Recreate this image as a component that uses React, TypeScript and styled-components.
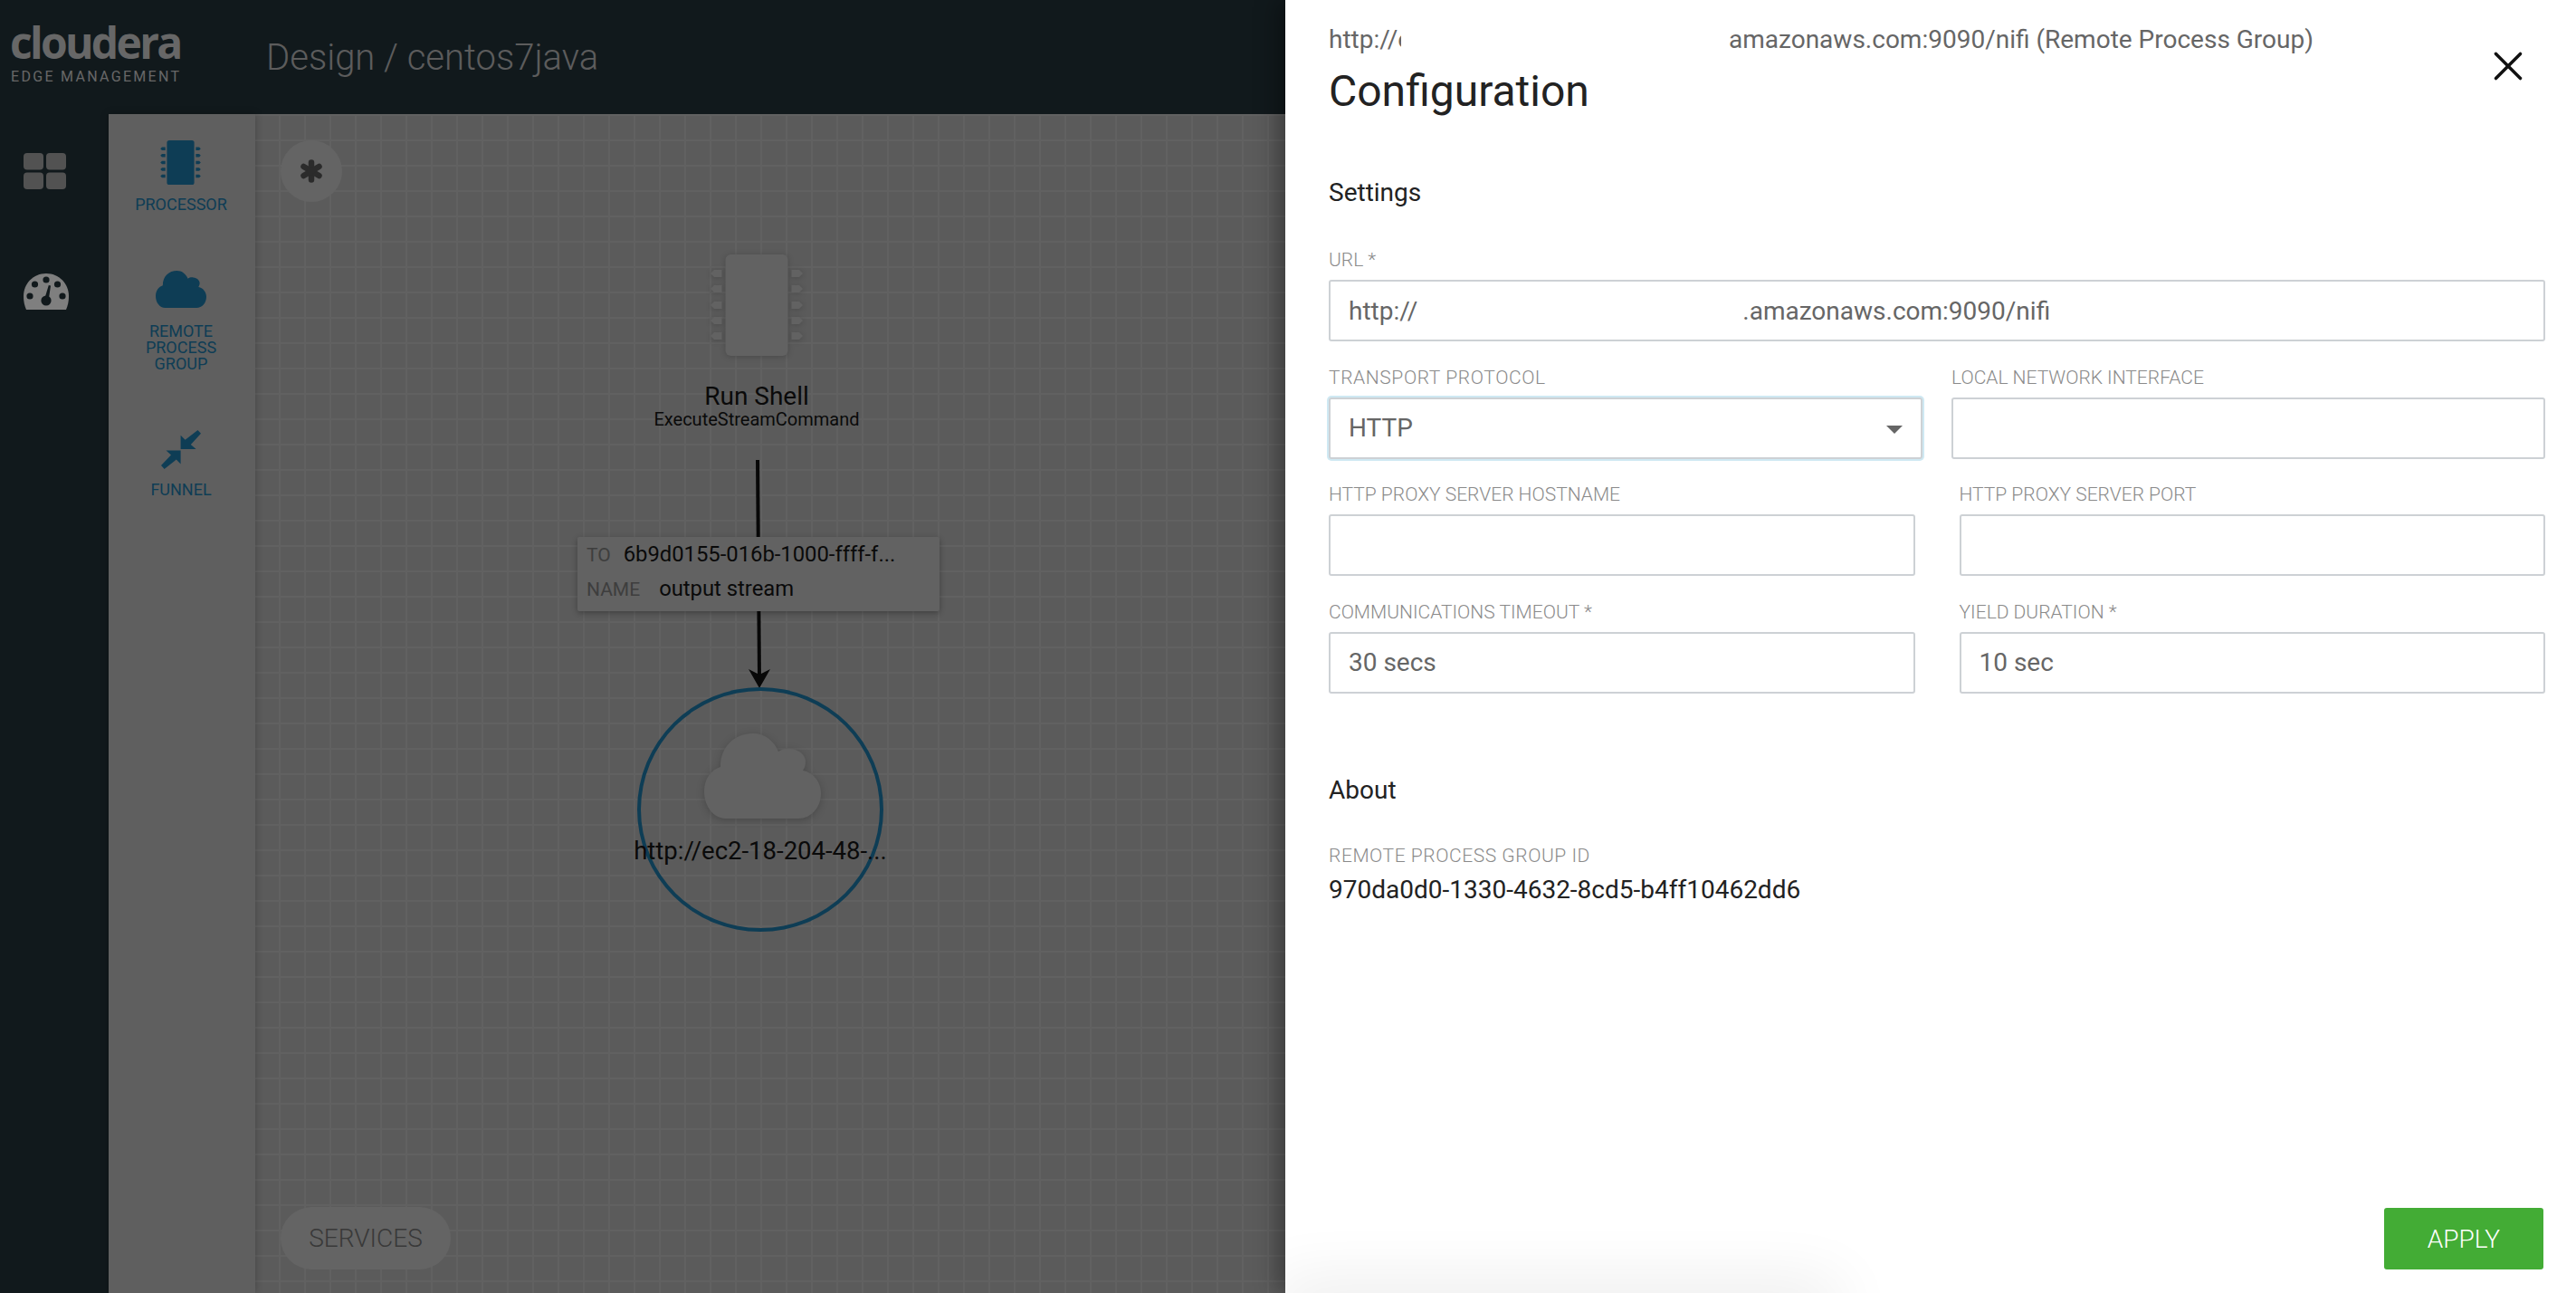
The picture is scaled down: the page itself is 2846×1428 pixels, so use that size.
import React, { type FC } from "react";
import styled, { createGlobalStyle } from "styled-components";
import { X } from "lucide-react";

const GlobalStyle = createGlobalStyle`
  html, body { margin: 0; padding: 0; height: 100%; }
  body { font-family: Roboto, "Liberation Sans", sans-serif; overflow: hidden; }
  * { box-sizing: border-box; }
`;

const Page = styled.div`
  position: relative;
  display: flex;
  flex-direction: column;
  width: 100%;
  height: 100vh;
  overflow: hidden;
`;

const Header = styled.header`
  display: flex;
  align-items: center;
  height: 126px;
  flex: none;
  padding-left: 11px;
  background: #223238;
`;

const Logo = styled.div`
  display: flex;
  flex-direction: column;
  width: 189px;
  color: #cecece;
`;

const LogoWord = styled.span`
  font-family: "Open Sans", Roboto, sans-serif;
  font-weight: 700;
  font-size: 48px;
  line-height: 46px;
  letter-spacing: -2.7px;
  margin-top: -8px;
`;

const LogoSub = styled.span`
  font-size: 16px;
  line-height: 20px;
  letter-spacing: 2.3px;
  white-space: nowrap;
  margin: 5px 0 0 1px;
`;

const Title = styled.h1`
  margin: 0 0 0 94px;
  font-weight: 300;
  font-size: 40px;
  color: #b8b8b8;
`;

const Body = styled.div`
  display: flex;
  flex: 1;
  min-height: 0;
`;

const Sidebar = styled.nav`
  display: flex;
  flex-direction: column;
  gap: 93px;
  width: 120px;
  flex: none;
  padding: 43px 0 0 26px;
  background: #223238;
`;

const Palette = styled.aside`
  position: relative;
  z-index: 1;
  display: flex;
  flex-direction: column;
  align-items: center;
  gap: 64px;
  width: 162px;
  flex: none;
  padding: 29px 2px 0 0;
  background: #bfbfbf;
  box-shadow: 0 0 8px rgba(0, 0, 0, 0.25);
`;

const PaletteItem = styled.div<{ $gap: number }>`
  display: flex;
  flex-direction: column;
  align-items: center;
  gap: ${(p) => p.$gap}px;
  color: #1c7aaa;
`;

const PaletteLabel = styled.span`
  font-size: 18px;
  line-height: 18px;
  text-align: center;
  text-transform: uppercase;
`;

const Canvas = styled.main`
  position: relative;
  flex: 1;
  overflow: hidden;
  background-color: #b6b6b6;
  background-image:
    linear-gradient(to right, #c2c2c2 2px, transparent 2px),
    linear-gradient(to bottom, #c2c2c2 2px, transparent 2px);
  background-size: 28px 28px;
  background-position: -2px 0px;
`;

const CanvasButton = styled.div`
  position: absolute;
  left: 28px;
  display: flex;
  align-items: center;
  justify-content: center;
  background: #c8c8c8;
`;

const ToolButton = styled(CanvasButton)`
  top: 29px;
  width: 68px;
  height: 68px;
  border-radius: 50%;
`;

const ServicesButton = styled(CanvasButton)`
  bottom: 26px;
  width: 188px;
  height: 69px;
  border-radius: 35px;
  font-size: 28px;
  font-weight: 300;
  color: #727272;
`;

const ProcessorNode = styled.div`
  position: absolute;
  left: 404px;
  top: 155px;
  width: 300px;
  display: flex;
  flex-direction: column;
  align-items: center;
  color: #141414;
`;

const NodeIcon = styled.div`
  display: flex;
  color: #c4c4c4;
  margin-bottom: 31px;
  filter: drop-shadow(0 1px 3px rgba(0, 0, 0, 0.2));
`;

const NodeName = styled.span`
  font-size: 28px;
  line-height: 28px;
`;

const NodeType = styled.span`
  font-size: 20px;
  line-height: 22px;
`;

const Connection = styled.svg`
  position: absolute;
  left: 538px;
  top: 382px;
`;

const ConnectionLabel = styled.div`
  position: absolute;
  left: 356px;
  top: 467px;
  width: 400px;
  height: 82px;
  padding: 0 10px;
  background: #c4c4c4;
  border-radius: 2px;
  box-shadow: 0 2px 6px rgba(0, 0, 0, 0.3);
  color: #141414;
`;

const ConnectionRow = styled.div<{ $gap: number }>`
  display: flex;
  align-items: baseline;
  gap: ${(p) => p.$gap}px;
  height: 38px;
  line-height: 38px;
  font-size: 23.8px;
  white-space: nowrap;
`;

const ConnectionKey = styled.span`
  font-size: 21px;
  color: #7c7c7c;
`;

const RemoteNode = styled.div`
  position: absolute;
  left: 422px;
  top: 633px;
  width: 272px;
  height: 270px;
  display: flex;
  flex-direction: column;
  align-items: center;
  padding-top: 47px;
  border: 4px solid #1c7aaa;
  border-radius: 50%;
  color: #141414;
`;

const RemoteIcon = styled.div`
  display: flex;
  color: #c4c4c4;
  margin: 0 0 19px 5px;
  filter: drop-shadow(0 2px 4px rgba(0, 0, 0, 0.2));
`;

const RemoteName = styled.span`
  font-size: 27.5px;
  line-height: 34px;
  white-space: nowrap;
`;

const Scrim = styled.div`
  position: absolute;
  inset: 0;
  z-index: 2;
  background: rgba(0, 0, 0, 0.5);
`;

const Drawer = styled.section`
  position: absolute;
  top: 0;
  right: 0;
  bottom: 0;
  z-index: 3;
  width: 1426px;
  display: flex;
  flex-direction: column;
  padding: 28px 34px 26px 48px;
  background: #fff;
  box-shadow: -8px 0 24px rgba(0, 0, 0, 0.35);
  overflow: hidden;

  &::after {
    content: "";
    position: absolute;
    left: 0;
    bottom: -30px;
    width: 600px;
    height: 30px;
    box-shadow: 0 0 70px 10px rgba(0, 0, 0, 0.09);
  }
`;

const Subtitle = styled.div`
  display: flex;
  font-size: 28px;
  line-height: 32px;
  color: #666;
  white-space: nowrap;
`;

const ClippedHost = styled.span`
  width: 80px;
  margin-right: 362px;
  overflow: hidden;
`;

const DrawerTitle = styled.h2`
  margin: 13px 0 68px;
  font-weight: 400;
  font-size: 48px;
  line-height: 56px;
  color: #222;
`;

const CloseButton = styled.button`
  position: absolute;
  top: 59px;
  right: 61px;
  display: flex;
  align-items: center;
  justify-content: center;
  width: 28px;
  height: 28px;
  padding: 0;
  border: 0;
  background: none;
  color: #111;
`;

const SectionTitle = styled.h3`
  margin: 0 0 46px;
  font-weight: 400;
  font-size: 28px;
  line-height: 32px;
  color: #222;
`;

const FormRows = styled.div`
  display: flex;
  flex-direction: column;
  gap: 27.67px;
  margin-bottom: 91px;
`;

const FormRow = styled.div<{ $gap: number }>`
  display: grid;
  grid-template-columns: 1fr 1fr;
  column-gap: ${(p) => p.$gap}px;
`;

const Field = styled.div`
  display: flex;
  flex-direction: column;
  min-width: 0;
`;

const FieldLabel = styled.label<{ $tracking?: number }>`
  font-size: 21px;
  font-weight: 300;
  line-height: 24px;
  letter-spacing: ${(p) => p.$tracking ?? 0}px;
  color: #8a8a8a;
  margin-bottom: 10px;
  white-space: nowrap;
`;

const InputBox = styled.div<{ $focused?: boolean }>`
  position: relative;
  display: flex;
  align-items: center;
  height: 68px;
  padding: 0 20px;
  border: 2px solid #cdd1d5;
  border-radius: 3px;
  background: #fff;
  font-size: 28px;
  font-weight: 400;
  color: #666;
  white-space: nowrap;
  ${(p) => p.$focused && "box-shadow: 0 0 0 2px #cfe9f3;"}
`;

const RedactedGap = styled.span`
  display: inline-block;
  width: 359px;
`;

const SelectArrow = styled.span`
  position: absolute;
  right: 20px;
  top: 29px;
  border-left: 9px solid transparent;
  border-right: 9px solid transparent;
  border-top: 9px solid #666;
`;

const AboutTitle = styled(SectionTitle)`
  margin-bottom: 44px;
`;

const AboutValue = styled.div`
  font-size: 28px;
  line-height: 32px;
  color: #222;
`;

const Footer = styled.div`
  display: flex;
  justify-content: flex-end;
  margin: auto 2px 0 0;
`;

const ApplyButton = styled.button`
  width: 176px;
  height: 68px;
  border: 0;
  border-radius: 3px;
  background: #43ac35;
  color: #fff;
  font-family: inherit;
  font-size: 28px;
  font-weight: 300;
  text-transform: uppercase;
`;

const GridIcon: FC = () => (
  <svg width="47" height="40" viewBox="0 0 47 40" fill="#a4a4a4">
    <rect x="0" y="0" width="22" height="18.5" rx="4" />
    <rect x="25" y="0" width="22" height="18.5" rx="4" />
    <rect x="0" y="21.5" width="22" height="18.5" rx="4" />
    <rect x="25" y="21.5" width="22" height="18.5" rx="4" />
  </svg>
);

const GaugeIcon: FC = () => (
  <svg width="50" height="40" viewBox="0 0 50 40">
    <path
      fill="#ffffff"
      d="M3 40C1 35 0 31 0 25C0 11 11 0 25 0C39 0 50 11 50 25C50 31 49 35 47 40Z"
    />
    <g fill="#223238">
      <circle cx="25" cy="7" r="3.6" />
      <circle cx="12.5" cy="12" r="3.6" />
      <circle cx="37.5" cy="12" r="3.6" />
      <circle cx="7" cy="25" r="3.6" />
      <circle cx="43" cy="25" r="3.6" />
      <circle cx="25" cy="30" r="5.6" />
      <path d="M27.8 13L30 13.6L27.6 30H22.6Z" />
    </g>
  </svg>
);

const AsteriskIcon: FC = () => (
  <svg width="26" height="26" viewBox="0 0 26 26" stroke="#565656" strokeWidth="6.5" strokeLinecap="round">
    <path d="M13 3.5V22.5" />
    <path d="M4.5 8L21.5 18" />
    <path d="M21.5 8L4.5 18" />
  </svg>
);

const PIN_ROWS = [21, 38, 56, 73, 90];

const ChipIcon: FC<{ width: number; height: number }> = ({ width, height }) => (
  <svg width={width} height={height} viewBox="0 0 102 112" fill="currentColor">
    <rect x="16.5" y="0" width="69" height="112" rx="6" />
    {PIN_ROWS.map((y) => (
      <g key={y}>
        <path d={`M0 ${y}L4 ${y - 4}H12.5V${y + 4}H4Z`} />
        <path d={`M102 ${y}L98 ${y - 4}H89.5V${y + 4}H98Z`} />
      </g>
    ))}
  </svg>
);

const CloudIcon: FC<{ width: number; height: number }> = ({ width, height }) => (
  <svg width={width} height={height} viewBox="0 0 129 94" fill="currentColor">
    <path d="M24 94C10 94 0 80 0 64C0 50 8 40 18 37C18 14 34 0 54 0C67 0 77 8 82 20C86 17 91 16 96 17C105 18 112 24 112 31C112 35 111 38 109 41C120 43 129 53 129 66C129 82 118 94 104 94Z" />
  </svg>
);

const FunnelIcon: FC = () => (
  <svg width="44" height="43" viewBox="0 0 44 43" fill="currentColor">
    <path d="M21.6 21V5.7L26.6 10.7L40.5 0L44 3.8L32.8 16L38.6 21Z" />
    <path d="M21.6 22.6V37.5L16.8 32.6L3.6 43L0 39L11 27.5L5.5 22.6Z" />
  </svg>
);

const App: FC = () => (
  <Page>
    <GlobalStyle />
    <Header>
      <Logo>
        <LogoWord>cloudera</LogoWord>
        <LogoSub>EDGE MANAGEMENT</LogoSub>
      </Logo>
      <Title>Design / centos7java</Title>
    </Header>
    <Body>
      <Sidebar>
        <GridIcon />
        <GaugeIcon />
      </Sidebar>
      <Palette>
        <PaletteItem $gap={13}>
          <ChipIcon width={45} height={49} />
          <PaletteLabel>Processor</PaletteLabel>
        </PaletteItem>
        <PaletteItem $gap={17}>
          <CloudIcon width={56} height={41} />
          <PaletteLabel>
            Remote
            <br />
            Process
            <br />
            Group
          </PaletteLabel>
        </PaletteItem>
        <PaletteItem $gap={14}>
          <FunnelIcon />
          <PaletteLabel>Funnel</PaletteLabel>
        </PaletteItem>
      </Palette>
      <Canvas>
        <ToolButton>
          <AsteriskIcon />
        </ToolButton>
        <ProcessorNode>
          <NodeIcon>
            <ChipIcon width={102} height={112} />
          </NodeIcon>
          <NodeName>Run Shell</NodeName>
          <NodeType>ExecuteStreamCommand</NodeType>
        </ProcessorNode>
        <Connection width="40" height="256" viewBox="0 0 40 256">
          <path d="M17 0L19 240" stroke="#111" strokeWidth="4" fill="none" />
          <path d="M19 252L7 231L19 237L31 231Z" fill="#111" />
        </Connection>
        <ConnectionLabel>
          <ConnectionRow $gap={14}>
            <ConnectionKey>TO</ConnectionKey>
            <span>6b9d0155-016b-1000-ffff-f...</span>
          </ConnectionRow>
          <ConnectionRow $gap={21}>
            <ConnectionKey>NAME</ConnectionKey>
            <span>output stream</span>
          </ConnectionRow>
        </ConnectionLabel>
        <RemoteNode>
          <RemoteIcon>
            <CloudIcon width={129} height={94} />
          </RemoteIcon>
          <RemoteName>http://ec2-18-204-48-...</RemoteName>
        </RemoteNode>
        <ServicesButton>SERVICES</ServicesButton>
      </Canvas>
    </Body>
    <Scrim />
    <Drawer>
      <Subtitle>
        <ClippedHost>http://ec2</ClippedHost>
        <span>amazonaws.com:9090/nifi (Remote Process Group)</span>
      </Subtitle>
      <DrawerTitle>Configuration</DrawerTitle>
      <CloseButton aria-label="Close">
        <X size={54} strokeWidth={1.6} style={{ flex: "none" }} />
      </CloseButton>
      <SectionTitle>Settings</SectionTitle>
      <FormRows>
        <Field>
          <FieldLabel>URL *</FieldLabel>
          <InputBox>
            http://
            <RedactedGap />
            .amazonaws.com:9090/nifi
          </InputBox>
        </Field>
        <FormRow $gap={32}>
          <Field>
            <FieldLabel $tracking={0.6}>TRANSPORT PROTOCOL</FieldLabel>
            <InputBox $focused>
              HTTP
              <SelectArrow />
            </InputBox>
          </Field>
          <Field>
            <FieldLabel>LOCAL NETWORK INTERFACE</FieldLabel>
            <InputBox />
          </Field>
        </FormRow>
        <FormRow $gap={49}>
          <Field>
            <FieldLabel>HTTP PROXY SERVER HOSTNAME</FieldLabel>
            <InputBox />
          </Field>
          <Field>
            <FieldLabel>HTTP PROXY SERVER PORT</FieldLabel>
            <InputBox />
          </Field>
        </FormRow>
        <FormRow $gap={49}>
          <Field>
            <FieldLabel>COMMUNICATIONS TIMEOUT *</FieldLabel>
            <InputBox>30 secs</InputBox>
          </Field>
          <Field>
            <FieldLabel>YIELD DURATION *</FieldLabel>
            <InputBox>10 sec</InputBox>
          </Field>
        </FormRow>
      </FormRows>
      <AboutTitle>About</AboutTitle>
      <FieldLabel $tracking={0.55}>REMOTE PROCESS GROUP ID</FieldLabel>
      <AboutValue>970da0d0-1330-4632-8cd5-b4ff10462dd6</AboutValue>
      <Footer>
        <ApplyButton>Apply</ApplyButton>
      </Footer>
    </Drawer>
  </Page>
);

export default App;
